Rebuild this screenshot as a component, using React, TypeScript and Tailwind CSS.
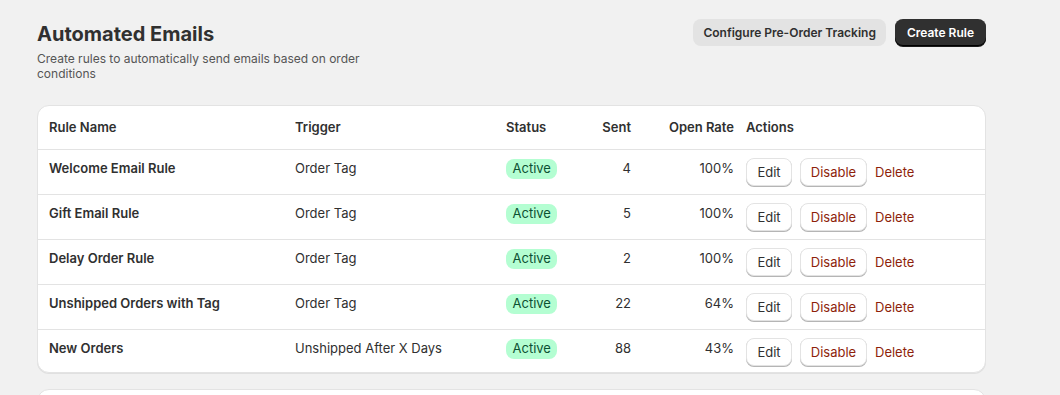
import React from "react";

type Rule = {
  name: string;
  trigger: string;
  sent: number;
  openRate: string;
};

const rules: Rule[] = [
  { name: "Welcome Email Rule", trigger: "Order Tag", sent: 4, openRate: "100%" },
  { name: "Gift Email Rule", trigger: "Order Tag", sent: 5, openRate: "100%" },
  { name: "Delay Order Rule", trigger: "Order Tag", sent: 2, openRate: "100%" },
  { name: "Unshipped Orders with Tag", trigger: "Order Tag", sent: 22, openRate: "64%" },
  { name: "New Orders", trigger: "Unshipped After X Days", sent: 88, openRate: "43%" },
];

const cols = "grid grid-cols-[251px_211px_77px_60px_103px_1fr]";

const App = () => {
  return (
    <div
      className="min-h-screen bg-[#f1f1f1] text-[#303030] pl-[37px] pt-[19px]"
      style={{ fontFamily: "Inter, 'Noto Sans', sans-serif" }}
    >
      <div className="w-[949px]">
        {/* header */}
        <div className="flex justify-between items-start">
          <div className="pt-[1px]">
            <h1 className="text-[20px] leading-[28px] font-bold">Automated Emails</h1>
            <p className="text-[12px] leading-[15px] text-[#555] max-w-[340px] mt-[3px]">
              Create rules to automatically send emails based on order conditions
            </p>
          </div>
          <div className="flex gap-[9px]">
            <button className="h-[27px] px-[10px] rounded-lg bg-[#e3e3e3] text-[12px] font-semibold text-[#303030]">
              Configure Pre-Order Tracking
            </button>
            <button className="h-[27px] px-3 rounded-lg bg-[#303030] text-[12px] font-semibold text-white shadow-[inset_0_-1px_0_#000,0_1px_0_#1a1a1a]">
              Create Rule
            </button>
          </div>
        </div>

        {/* table card */}
        <div className="mt-[24px] bg-white rounded-xl border border-[#e3e3e3] shadow-[0_1px_0_rgba(0,0,0,0.07)] overflow-hidden">
          <div className={`${cols} h-[44px] items-center text-[13px] font-semibold border-b border-[#e3e3e3]`}>
            <div className="pl-[11px] pr-1.5">Rule Name</div>
            <div className="px-1.5">Trigger</div>
            <div className="px-1.5">Status</div>
            <div className="px-1.5 text-right">Sent</div>
            <div className="px-1.5 text-right">Open Rate</div>
            <div className="px-1.5">Actions</div>
          </div>
          {rules.map((r, i) => {
            const last = i === rules.length - 1;
            return (
              <div
                key={r.name}
                className={`${cols} items-start pt-2 text-[13px] ${
                  last ? "h-[42px]" : "h-[45px] border-b border-[#e3e3e3]"
                }`}
              >
                <div className="pl-[11px] pr-1.5 leading-[20px] font-semibold">{r.name}</div>
                <div className="px-1.5 leading-[20px]">{r.trigger}</div>
                <div className="px-1.5 pt-[1px]">
                  <span className="inline-flex items-center h-[20px] px-[6.5px] rounded-lg bg-[#b4fed2] text-[#0c5132] text-[13px]">
                    Active
                  </span>
                </div>
                <div className="px-1.5 leading-[20px] text-right">{r.sent}</div>
                <div className="px-1.5 leading-[20px] text-right">{r.openRate}</div>
                <div className="pl-[6px] flex items-center gap-2">
                  <button className="h-[28px] w-[46px] pt-[2px] rounded-lg bg-white border border-[#e3e3e3] shadow-[0_1px_0_#b5b5b5] text-[13px] text-[#303030]">
                    Edit
                  </button>
                  <button className="h-[28px] w-[67px] pt-[2px] rounded-lg bg-white border border-[#e3e3e3] shadow-[0_1px_0_#b5b5b5] text-[13px] text-[#8e1f0b]">
                    Disable
                  </button>
                  <button className="pt-[2px] text-[13px] text-[#8e1f0b]">Delete</button>
                </div>
              </div>
            );
          })}
        </div>

        {/* next card */}
        <div className="mt-[16px] bg-white rounded-xl border border-[#e3e3e3] h-[60px]" />
      </div>
    </div>
  );
};

export default App;
